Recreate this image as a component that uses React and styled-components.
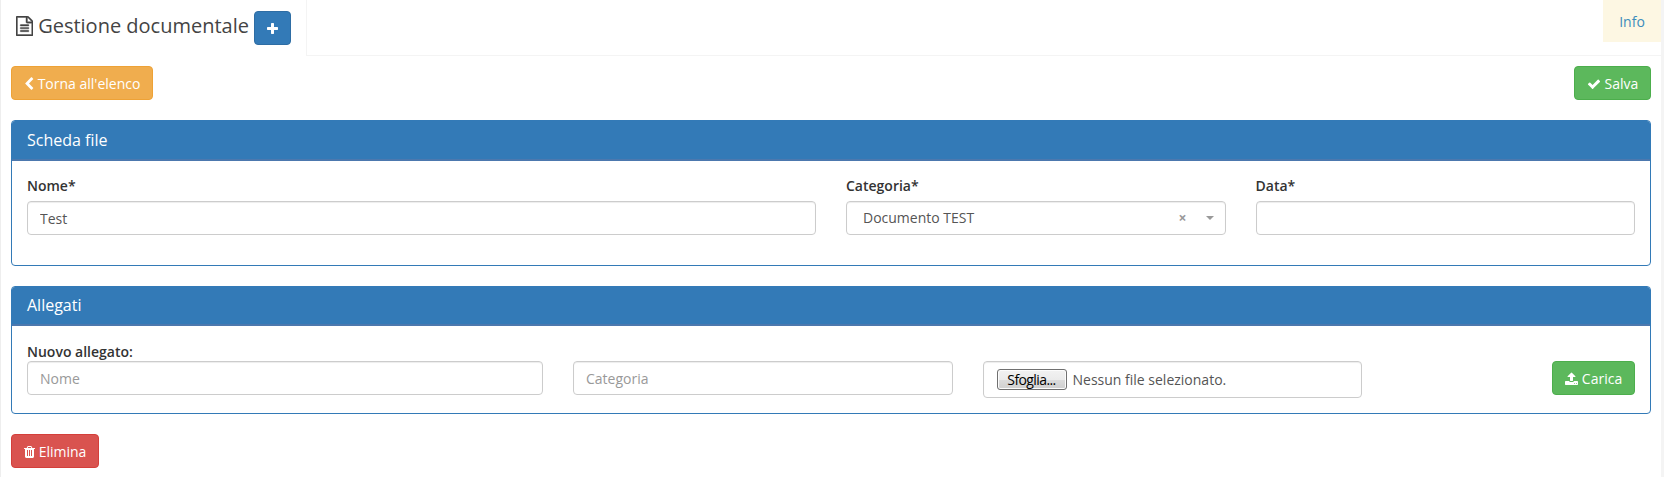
import React from 'react';
import styled, { createGlobalStyle, css } from 'styled-components';

const GlobalStyle = createGlobalStyle`
  *, *::before, *::after { box-sizing: border-box; }
  html, body { margin: 0; background: #fff; }
  body {
    font-family: 'Open Sans', 'Liberation Sans', sans-serif;
    font-size: 14px;
    line-height: 20px;
    color: #333;
    overflow: hidden;
  }
`;

const icons = {
  file: [1536, 'M1596 380q28 28 48 76t20 88v1152q0 40-28 68t-68 28h-1344q-40 0-68-28t-28-68v-1600q0-40 28-68t68-28h896q40 0 88 20t76 48zm-444-244v376h376q-10-29-22-41l-313-313q-12-12-41-22zm384 1528v-1024h-416q-40 0-68-28t-28-68v-416h-768v1536h1280zm-1024-864q0-14 9-23t23-9h704q14 0 23 9t9 23v64q0 14-9 23t-23 9h-704q-14 0-23-9t-9-23v-64zm736 224q14 0 23 9t9 23v64q0 14-9 23t-23 9h-704q-14 0-23-9t-9-23v-64q0-14 9-23t23-9h704zm0 256q14 0 23 9t9 23v64q0 14-9 23t-23 9h-704q-14 0-23-9t-9-23v-64q0-14 9-23t23-9h704z'],
  plus: [1408, 'M1600 736v192q0 40-28 68t-68 28h-416v416q0 40-28 68t-68 28h-192q-40 0-68-28t-28-68v-416h-416q-40 0-68-28t-28-68v-192q0-40 28-68t68-28h416v-416q0-40 28-68t68-28h192q40 0 68 28t28 68v416h416q40 0 68 28t28 68z'],
  check: [1792, 'M1671 566q0 40-28 68l-724 724-136 136q-28 28-68 28t-68-28l-136-136-362-362q-28-28-28-68t28-68l136-136q28-28 68-28t68 28l294 295 656-657q28-28 68-28t68 28l136 136q28 28 28 68z'],
  chevron: [1280, 'M1427 301l-531 531 531 531q19 19 19 45t-19 45l-166 166q-19 19-45 19t-45-19l-742-742q-19-19-19-45t19-45l742-742q19-19 45-19t45 19l166 166q19 19 19 45t-19 45z'],
  upload: [1664, 'M1344 1472q0-26-19-45t-45-19-45 19-19 45 19 45 45 19 45-19 19-45zm256 0q0-26-19-45t-45-19-45 19-19 45 19 45 45 19 45-19 19-45zm128-224v320q0 40-28 68t-68 28h-1472q-40 0-68-28t-28-68v-320q0-40 28-68t68-28h427q21 56 70.5 92t110.5 36h256q61 0 110.5-36t70.5-92h427q40 0 68 28t28 68zm-325-648q-17 40-59 40h-256v448q0 26-19 45t-45 19h-256q-26 0-45-19t-19-45v-448h-256q-42 0-59-40-17-39 14-69l448-448q18-19 45-19t45 19l448 448q31 30 14 69z'],
  trash: [1408, 'M704 1376v-704q0-14-9-23t-23-9h-64q-14 0-23 9t-9 23v704q0 14 9 23t23 9h64q14 0 23-9t9-23zm256 0v-704q0-14-9-23t-23-9h-64q-14 0-23 9t-9 23v704q0 14 9 23t23 9h64q14 0 23-9t9-23zm256 0v-704q0-14-9-23t-23-9h-64q-14 0-23 9t-9 23v704q0 14 9 23t23 9h64q14 0 23-9t9-23zm-544-992h448l-48-117q-7-9-17-11h-317q-10 2-17 11zm928 32v64q0 14-9 23t-23 9h-96v948q0 83-47 143.5t-113 60.5h-832q-66 0-113-58.5t-47-141.5v-952h-96q-14 0-23-9t-9-23v-64q0-14 9-23t23-9h309l70-167q15-37 54-63t79-26h320q40 0 79 26t54 63l70 167h309q14 0 23 9t9 23z'],
};

const Glyph = styled.svg`
  display: block;
  flex: none;
  fill: currentColor;
  stroke: currentColor;
  stroke-width: ${(p) => p.$weight};
`;

function Icon({ name, size = 14, weight = 0 }) {
  const [width, d] = icons[name];
  return (
    <Glyph
      $weight={weight}
      viewBox={`${(1792 - width) / 2} 0 ${width} 1792`}
      width={(size * width) / 1792}
      height={size}
      aria-hidden="true"
    >
      <path d={d} />
    </Glyph>
  );
}

const Page = styled.div`
  height: 477px;
  border-left: 1px solid #eee;
  border-right: 3px solid #f4f4f4;
`;

const Header = styled.header`
  display: flex;
  height: 56px;
`;

const Tab = styled.div`
  display: flex;
  width: 306px;
  height: 56px;
  padding: 11px 0 0 15px;
  border-right: 1px solid #f4f4f4;
`;

const Title = styled.h1`
  display: flex;
  gap: 5px;
  width: 238px;
  margin: 0;
  padding-top: 5px;
  font-size: 20px;
  font-weight: 400;
  line-height: 20px;
  white-space: nowrap;
  color: #444;
`;

const HeaderRest = styled.div`
  flex: 1;
  display: flex;
  justify-content: flex-end;
  border-bottom: 1px solid #f4f4f4;
`;

const InfoLink = styled.a`
  width: 58px;
  height: 42px;
  line-height: 44px;
  text-align: center;
  background: #fdf7e3;
  color: #3c8dbc;
`;

const tones = {
  primary: ['#337ab7', '#2e6da4'],
  warning: ['#f0ad4e', '#eea236'],
  success: ['#5cb85c', '#4cae4c'],
  danger: ['#d9534f', '#d43f3a'],
};

const Button = styled.button`
  display: flex;
  align-items: center;
  justify-content: center;
  gap: 4px;
  flex: none;
  width: ${(p) => p.$width}px;
  height: 34px;
  padding: ${(p) => (p.$tone === 'danger' ? 1 : 2)}px 0 0;
  border: 1px solid ${(p) => tones[p.$tone][1]};
  border-radius: 4px;
  background: ${(p) => tones[p.$tone][0]};
  color: #fff;
  font: inherit;
  white-space: nowrap;
`;

const Content = styled.main`
  display: flex;
  flex-direction: column;
  gap: 20px;
  padding: 10px 10px 0;
`;

const Toolbar = styled.div`
  display: flex;
  justify-content: space-between;
`;

const Panel = styled.section`
  height: ${(p) => p.$height}px;
  border: 1px solid #337ab7;
  border-radius: 4px;
  overflow: hidden;
`;

const PanelHeading = styled.h2`
  height: ${(p) => p.$height}px;
  margin: 0;
  padding: ${(p) => p.$height - 31}px 15px 0;
  border-bottom: 2px solid #4c78ae;
  background: #337ab7;
  color: #fff;
  font-size: 16px;
  font-weight: 400;
  line-height: 20px;
`;

const PanelBody = styled.div`
  padding: ${(p) => p.$top}px 15px 0;
`;

const Row = styled.div`
  display: grid;
  grid-template-columns: repeat(12, 1fr);
  margin: 0 -15px;
`;

const Column = styled.div`
  grid-column: span ${(p) => p.$span};
  min-width: 0;
  padding: 0 15px;
  ${(p) => p.$end && css`
    display: flex;
    justify-content: flex-end;
  `}
`;

const Label = styled.label`
  display: block;
  height: ${(p) => p.$height}px;
  font-weight: 600;
`;

const control = css`
  display: flex;
  align-items: center;
  width: 100%;
  height: 34px;
  padding: 0 12px;
  border: 1px solid #ccc;
  border-radius: 4px;
  background: #fff;
  box-shadow: inset 0 1px 1px rgba(0, 0, 0, 0.075);
  color: #555;
`;

const Input = styled.input`
  ${control}
  font: inherit;
  outline: 0;
  &::placeholder { color: #999; opacity: 1; }
`;

const Select = styled.div`
  ${control}
  padding: 0 11px 0 16px;
`;

const SelectValue = styled.span`
  flex: 1;
`;

const Clear = styled.span`
  width: 8px;
  margin-right: 19px;
  font-size: 14px;
  font-weight: 700;
  line-height: 18px;
  color: #999;
`;

const Caret = styled.span`
  border: 4px solid transparent;
  border-top-color: #999;
  border-bottom-width: 0;
`;

const FileField = styled.div`
  ${control}
  height: 37px;
  padding: 0 13px;
  gap: 6px;
`;

const Browse = styled.button`
  width: 70px;
  height: 21px;
  padding: 0;
  border: 1px solid #707070;
  border-radius: 3px;
  background: linear-gradient(#f2f2f2 0%, #ebebeb 50%, #dddddd 50%, #cfcfcf 100%);
  box-shadow: inset 0 0 0 1px #fcfcfc;
  color: #000;
  font-family: 'Open Sans', sans-serif;
  font-size: 14px;
  line-height: 18px;
  letter-spacing: -0.6px;
  white-space: nowrap;
`;

export default function App() {
  return (
    <>
      <GlobalStyle />
      <Page>
        <Header>
          <Tab>
            <Title>
              <Icon name="file" size={20} weight={36} />
              Gestione documentale
            </Title>
            <Button $tone="primary" $width={37} aria-label="Aggiungi">
              <Icon name="plus" />
            </Button>
          </Tab>
          <HeaderRest>
            <InfoLink>Info</InfoLink>
          </HeaderRest>
        </Header>
        <Content>
          <Toolbar>
            <Button $tone="warning" $width={142}>
              <Icon name="chevron" />
              Torna all'elenco
            </Button>
            <Button $tone="success" $width={77}>
              <Icon name="check" />
              Salva
            </Button>
          </Toolbar>
          <Panel $height={146}>
            <PanelHeading $height={40}>Scheda file</PanelHeading>
            <PanelBody $top={15}>
              <Row>
                <Column $span={6}>
                  <Label $height={25}>Nome*</Label>
                  <Input defaultValue="Test" />
                </Column>
                <Column $span={3}>
                  <Label $height={25}>Categoria*</Label>
                  <Select>
                    <SelectValue>Documento TEST</SelectValue>
                    <Clear>×</Clear>
                    <Caret />
                  </Select>
                </Column>
                <Column $span={3}>
                  <Label $height={25}>Data*</Label>
                  <Input />
                </Column>
              </Row>
            </PanelBody>
          </Panel>
          <Panel $height={128}>
            <PanelHeading $height={39}>Allegati</PanelHeading>
            <PanelBody $top={16}>
              <Label $height={19}>Nuovo allegato:</Label>
              <Row>
                <Column $span={4}>
                  <Input placeholder="Nome" />
                </Column>
                <Column $span={3}>
                  <Input placeholder="Categoria" />
                </Column>
                <Column $span={3}>
                  <FileField>
                    <Browse>Sfoglia...</Browse>
                    Nessun file selezionato.
                  </FileField>
                </Column>
                <Column $span={2} $end>
                  <Button $tone="success" $width={83}>
                    <Icon name="upload" />
                    Carica
                  </Button>
                </Column>
              </Row>
            </PanelBody>
          </Panel>
          <Button $tone="danger" $width={88}>
            <Icon name="trash" />
            Elimina
          </Button>
        </Content>
      </Page>
    </>
  );
}
